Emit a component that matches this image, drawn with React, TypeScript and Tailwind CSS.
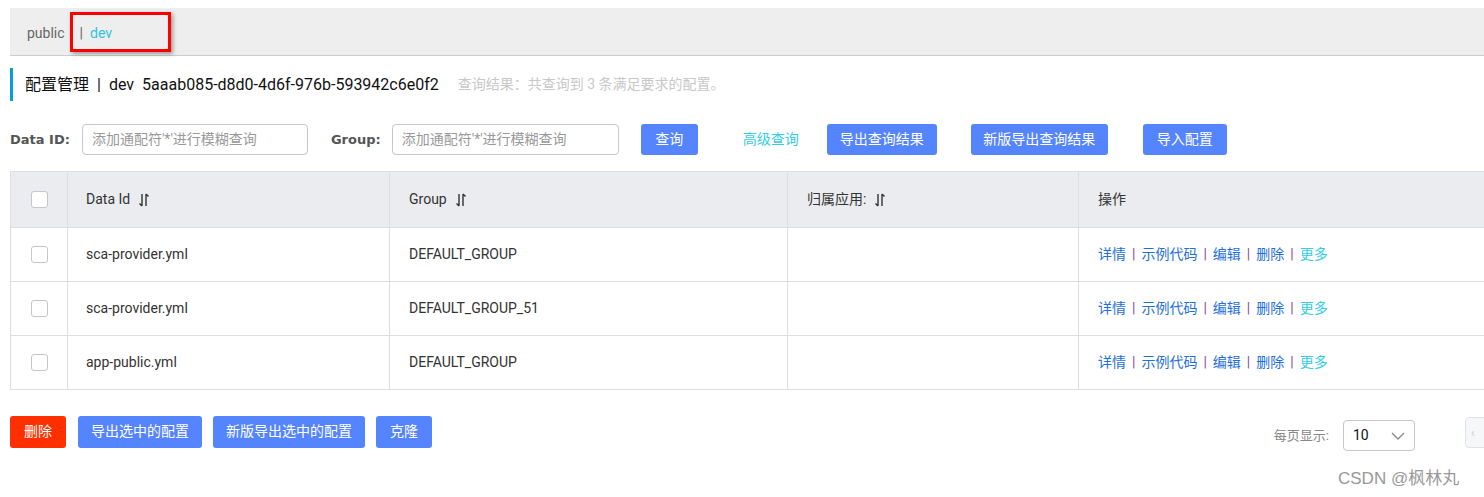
import React from "react";

const rows = [
  { id: "sca-provider.yml", group: "DEFAULT_GROUP" },
  { id: "sca-provider.yml", group: "DEFAULT_GROUP_51" },
  { id: "app-public.yml", group: "DEFAULT_GROUP" },
];

const SortIcon = () => (
  <svg width="12" height="14" viewBox="0 0 12 14" className="ml-2 inline-block">
    <path d="M4 1v12M4 13L1.5 10.5" stroke="#333" strokeWidth="1.4" fill="none" />
    <path d="M8 13V1M8 1l2.5 2.5" stroke="#333" strokeWidth="1.4" fill="none" />
  </svg>
);

const Checkbox = () => (
  <span className="block w-[17px] h-[17px] rounded-[3px] border border-[#c4c6cf] bg-white" />
);

const Btn = ({ children, className = "" }: { children: React.ReactNode; className?: string }) => (
  <button className={`h-[31px] rounded-[3px] bg-[#5584ff] text-white text-[14px] ${className}`}>
    {children}
  </button>
);

const Sep = () => <span className="text-[#8a4b9a] mx-[6px]">|</span>;

const Ops = () => (
  <div className="flex items-center text-[14px]">
    <span className="text-[#1e6fe0]">详情</span>
    <Sep />
    <span className="text-[#1e6fe0]">示例代码</span>
    <Sep />
    <span className="text-[#1e6fe0]">编辑</span>
    <Sep />
    <span className="text-[#1e6fe0]">删除</span>
    <Sep />
    <span className="text-[#33cde5]">更多</span>
  </div>
);

export default function App() {
  return (
    <div
      className="w-[1484px] h-[497px] bg-white overflow-hidden relative text-[#333]"
      style={{ fontFamily: 'Roboto, "Noto Sans CJK SC", sans-serif' }}
    >
      <div className="pt-[8px] pl-[10px]">
        <div className="relative h-[48px] bg-[#eeeeee] border-b border-[#cccccc] flex items-center pl-[17px] pt-[4px] text-[14px]">
          <span className="text-[#666]">public</span>
          <span className="text-[#666] ml-[15px]">|</span>
          <span className="text-[#2fc4df] ml-[7px]">dev</span>
          <div className="absolute left-[60px] top-[4px] w-[101px] h-[40px] border-[3px] border-[#ff0000] shadow-[2px_2px_4px_rgba(0,0,0,0.35)]" />
        </div>
      </div>

      <div className="ml-[10px] mt-[12px] h-[33px] border-l-[3px] border-[#0a9fd9] flex items-center pl-[12px]">
        <span className="text-[16px] text-[#111]">配置管理</span>
        <span className="text-[16px] text-[#111] mx-[8px]">|</span>
        <span className="text-[16px] text-[#111]">dev</span>
        <span className="text-[16px] text-[#111] ml-[8px]">5aaab085-d8d0-4d6f-976b-593942c6e0f2</span>
        <span className="text-[14px] text-[#c8c8c8] ml-[19px]">查询结果：共查询到 3 条满足要求的配置。</span>
      </div>

      <div className="flex items-center ml-[10px] mt-[23px] h-[31px]">
        <span className="text-[13px] font-bold text-[#555]" style={{ fontFamily: '"DejaVu Sans", sans-serif' }}>Data ID:</span>
        <div className="ml-[12px] w-[226px] h-[31px] rounded-[4px] border border-[#c4c6cf] flex items-center pl-[9px] text-[14px] text-[#999]">
          添加通配符'*'进行模糊查询
        </div>
        <span className="ml-[23px] text-[13px] font-bold text-[#555]" style={{ fontFamily: '"DejaVu Sans", sans-serif' }}>Group:</span>
        <div className="ml-[11px] w-[227px] h-[31px] rounded-[4px] border border-[#c4c6cf] flex items-center pl-[9px] text-[14px] text-[#999]">
          添加通配符'*'进行模糊查询
        </div>
        <Btn className="ml-[22px] w-[57px]">查询</Btn>
        <span className="ml-[45px] text-[14px] text-[#33cde5]">高级查询</span>
        <Btn className="ml-[28px] w-[110px]">导出查询结果</Btn>
        <Btn className="ml-[34px] w-[137px]">新版导出查询结果</Btn>
        <Btn className="ml-[35px] w-[84px]">导入配置</Btn>
      </div>

      <div className="ml-[10px] mt-[16px] w-[1500px] border border-[#dcdee3] text-[14px]">
        <div className="flex h-[55px] bg-[#ebecf0] items-center">
          <div className="w-[57px] h-full flex items-center justify-center border-r border-[#dcdee3]">
            <Checkbox />
          </div>
          <div className="w-[322px] h-full flex items-center pl-[18px] border-r border-[#dcdee3]">
            Data Id <SortIcon />
          </div>
          <div className="w-[398px] h-full flex items-center pl-[19px] border-r border-[#dcdee3]">
            Group <SortIcon />
          </div>
          <div className="w-[291px] h-full flex items-center pl-[19px] border-r border-[#dcdee3]">
            归属应用: <SortIcon />
          </div>
          <div className="flex-1 h-full flex items-center pl-[19px]">操作</div>
        </div>
        {rows.map((r, i) => (
          <div key={i} className="flex h-[54px] items-center border-t border-[#dcdee3]">
            <div className="w-[57px] h-full flex items-center justify-center border-r border-[#dcdee3]">
              <Checkbox />
            </div>
            <div className="w-[322px] h-full flex items-center pl-[18px] border-r border-[#dcdee3]">
              {r.id}
            </div>
            <div className="w-[398px] h-full flex items-center pl-[19px] border-r border-[#dcdee3]">
              {r.group}
            </div>
            <div className="w-[291px] h-full border-r border-[#dcdee3]" />
            <div className="flex-1 h-full flex items-center pl-[19px]">
              <Ops />
            </div>
          </div>
        ))}
      </div>

      <div className="flex items-center ml-[10px] mt-[22px]">
        <button className="h-[32px] w-[56px] rounded-[3px] bg-[#ff3000] text-white text-[14px]">删除</button>
        <Btn className="ml-[12px] w-[124px] h-[32px]">导出选中的配置</Btn>
        <Btn className="ml-[11px] w-[152px] h-[32px]">新版导出选中的配置</Btn>
        <Btn className="ml-[11px] w-[56px] h-[32px]">克隆</Btn>
        <div className="flex-1" />
        <span className="text-[13px] text-[#888] mt-[8px]">每页显示:</span>
        <div className="ml-[14px] mt-[8px] w-[72px] h-[31px] rounded-[4px] border border-[#c4c6cf] flex items-center justify-between px-[9px]">
          <span className="text-[14px] text-[#111]">10</span>
          <svg width="14" height="8" viewBox="0 0 14 8">
            <path d="M1 1l6 6 6-6" stroke="#888" strokeWidth="1.3" fill="none" />
          </svg>
        </div>
        <div className="ml-[50px] -mr-[11px] mt-[2px] w-[30px] h-[31px] rounded-[4px] border border-[#e0e2e8] bg-[#f6f7f9] flex items-center pl-[5px] text-[#ccc] text-[12px]">
          ‹
        </div>
      </div>

      <div className="absolute left-[1338px] top-[466px] text-[17px] text-[#999]" style={{ fontFamily: 'Arial, "Liberation Sans", "Noto Sans CJK SC", sans-serif' }}>
        CSDN @枫林丸
      </div>
    </div>
  );
}
